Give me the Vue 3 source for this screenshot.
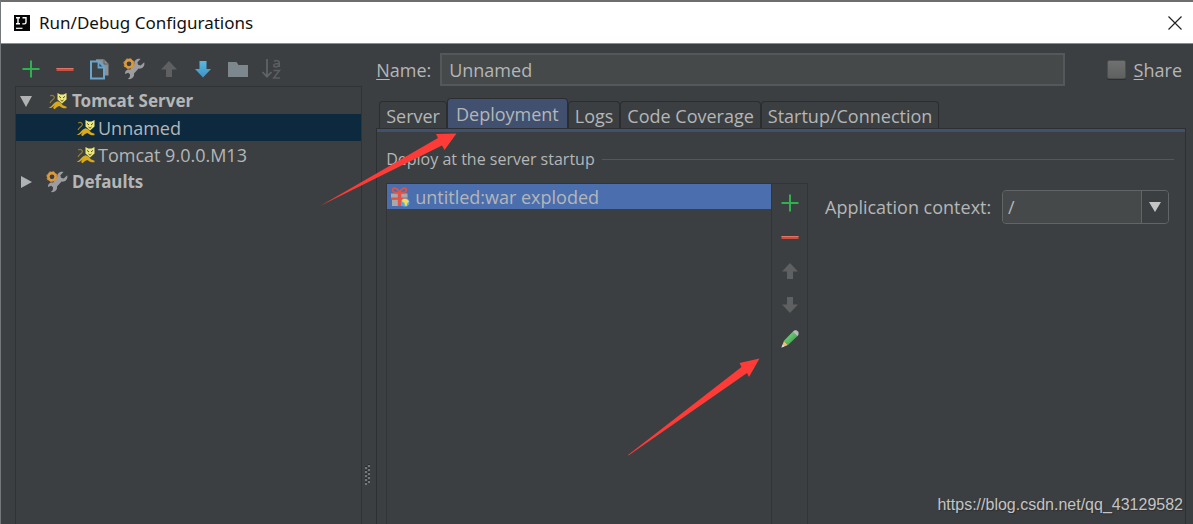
<script setup>
import { ref } from 'vue'

const name = ref('Unnamed')
const shared = ref(false)
const context = ref('/')
const activeTab = ref('Deployment')
const tabs = ['Server', 'Deployment', 'Logs', 'Code Coverage', 'Startup/Connection']
const selected = ref('Unnamed')

const tools = [
  { id: 'add', label: 'Add' },
  { id: 'remove', label: 'Remove' },
  { id: 'copy', label: 'Copy' },
  { id: 'wrench', label: 'Edit defaults' },
  { id: 'up', label: 'Move up', disabled: true },
  { id: 'downBlue', label: 'Move down' },
  { id: 'folder', label: 'Create folder' },
  { id: 'sort', label: 'Sort', disabled: true },
]
const sideTools = [
  { id: 'add', label: 'Add artifact' },
  { id: 'remove', label: 'Remove artifact' },
  { id: 'up', label: 'Move artifact up', disabled: true },
  { id: 'down', label: 'Move artifact down', disabled: true },
  { id: 'pencil', label: 'Edit artifact' },
]
const tree = [
  { label: 'Tomcat Server', icon: 'tomcat', group: true, open: true },
  { label: 'Unnamed', icon: 'tomcat' },
  { label: 'Tomcat 9.0.0.M13', icon: 'tomcat' },
  { label: 'Defaults', icon: 'wrench', group: true, open: false },
]
</script>

<template>
  <svg class="defs" width="0" height="0" aria-hidden="true">
    <defs>
      <linearGradient id="blueArrow" x1="0" y1="0" x2="0" y2="1">
        <stop offset="0" stop-color="#5cb8e0" /><stop offset="1" stop-color="#3d93c4" />
      </linearGradient>
      <linearGradient id="pencilBody" x1="0" y1="0" x2="1" y2="1">
        <stop offset="0" stop-color="#8ce08c" /><stop offset="1" stop-color="#2a9440" />
      </linearGradient>
      <symbol id="add" viewBox="0 0 22 22">
        <path d="M11 2.5v17M2.5 11h17" stroke="#2fb14f" stroke-width="2" fill="none" />
      </symbol>
      <symbol id="remove" viewBox="0 0 22 22">
        <path d="M2.5 10h17v3h-17z" fill="#c9503f" /><path d="M2.5 10h17v1h-17z" fill="#dd7668" />
      </symbol>
      <symbol id="copy" viewBox="0 0 22 22">
        <path d="M7 1.200h8l4.500 4.500V17.500h-4V9l-5-5H7z" fill="#8d8f91" />
        <path d="M15 1v5h4.500" fill="none" stroke="#5d6163" stroke-width="1" />
        <path d="M2 3.500h8l5 5.500V20.500H2z" fill="#3c4347" stroke="#69a5cd" stroke-width="2" />
        <path d="M9.500 4v5.500h5" fill="none" stroke="#69a5cd" stroke-width="1.800" />
      </symbol>
      <symbol id="wrench" viewBox="0 0 22 22">
        <path d="M21.200 4.200L17.700 7.500l-2.700-.7-.6-2.600L17.500 1c-3.700-.8-6.700 1.800-6.200 5.400L7.300 11.500c-3-.6-5.700 1.400-5.300 4.500l3.200-1.200 1.900 1.700-.4 2.700-1.900 1.800c3.800.8 6.900-1.900 6.200-5.400l4.600-5c3.700.6 6.600-2.500 5.600-6.400z" fill="#9b9da0" />
        <circle cx="6" cy="5.800" r="3.700" fill="#3c3f41" stroke="#dc9a3c" stroke-width="2.600" />
        <circle cx="6" cy="5.800" r="5.200" fill="none" stroke="#dc9a3c" stroke-width="1" stroke-dasharray="2 2.080" />
      </symbol>
      <symbol id="up" viewBox="0 0 22 22">
        <path d="M11 3l8 8.500h-5V19H8v-7.500H3z" fill="#5e6061" />
      </symbol>
      <symbol id="down" viewBox="0 0 22 22">
        <path d="M11 19l8-8.500h-5V3H8v7.500H3z" fill="#5e6061" />
      </symbol>
      <symbol id="downBlue" viewBox="0 0 22 22">
        <path d="M11 19.500l8-8.500h-4.500V3h-7v8H3z" fill="url(#blueArrow)" />
      </symbol>
      <symbol id="folder" viewBox="0 0 22 22">
        <path d="M1 4h8.500l2 3H21v12H1z" fill="#7d878e" />
      </symbol>
      <symbol id="sort" viewBox="0 0 22 22">
        <path d="M6 1v17.500M1.500 14L6 18.700l4.500-4.700" fill="none" stroke="#626466" stroke-width="1.700" />
        <path d="M13 3.400c1.500-1.200 5.300-1.200 5.300 1.200V9M18.300 5.500c-3 0-5.600.2-5.600 2s3.600 2 5.600-.2M12.500 12.500h6L12.700 20h6.300" fill="none" stroke="#5c5e60" stroke-width="1.500" />
      </symbol>
      <symbol id="pencil" viewBox="0 0 22 22">
        <path d="M2.500 19.500L5 12.800l4 4.200z" fill="#edc07a" />
        <path d="M2.500 19.500l1-2.900 1.900 1.800z" fill="#d9dcdd" />
        <path d="M5 12.800L13.500 4l4.800 4.300L9 17z" fill="url(#pencilBody)" />
        <path d="M13.500 4l2-1.800h2l2 1.800v2.800l-1.200 1.500z" fill="#b6bcbb" />
      </symbol>
      <symbol id="tomcat" viewBox="0 0 20 18">
        <path d="M.5 15.500c4-.3 4.200-5 9-6.300 2 .2 4 2 5.300 4.100l3.700 1.400v1.500c-3.500.2-5-.6-7-2.300-2 .5-3.800 2-4.700 3.300L5 16l1.800-2.700C5 15 3 16.800.5 15.500z" fill="#d9a91d" />
        <path d="M2.200 3.900c2.600-1.300 5.100.5 3.900 2.400S2.600 8.500 2.100 11.200" fill="none" stroke="#8d7d2c" stroke-width="1.200" />
        <path d="M9.500 1l2.800 1.500h3.400L18.500 1v6.500L14 11.500 9.500 7.500z" fill="#ece87e" />
        <path d="M11 4.300l2 1.700M17 4.300l-2 1.700M12.500 8l1.500 1.200L15.500 8" fill="none" stroke="#5c5520" stroke-width="1" />
      </symbol>
      <symbol id="gift" viewBox="0 0 20 20">
        <path d="M1 6.500h16.500v5H1zM2 12.500h15V19H2z" fill="#a8a8ab" />
        <path d="M7.800 6.500h3.500V19H7.800zM1 10.500h16.500v2H1z" fill="#df5349" />
        <path d="M9.500 5.500C7 0 2.500.5 2.500 3s4 3 7 2.500c3 .5 7 0 7-2.500s-4.500-3-7 2.500z" fill="none" stroke="#df5349" stroke-width="1.700" />
        <circle cx="15.200" cy="15.500" r="4.300" fill="#55a9dc" />
        <path d="M12 13c1.500-2.200 6-1.200 7 1.500l-1.500 1.500-1 3-1.700-.5-.3-2.700-2-.7z" fill="#f5dc58" />
      </symbol>
    </defs>
  </svg>

  <main class="dialog">
    <header class="titlebar">
      <svg class="logo" viewBox="0 0 16 16" aria-hidden="true">
        <rect width="16" height="16" fill="#050505" />
        <path d="M2 2.700h4M4 2.700v6M2 8.700h4M8.500 2.700H12v4.500q0 1.700-1.700 1.700H8.300" fill="none" stroke="#fff" stroke-width="1.400" />
        <path d="M2 13.300h6.500" stroke="#fff" stroke-width="1.200" />
      </svg>
      <h1>Run/Debug Configurations</h1>
      <button class="close" type="button" aria-label="Close">
        <svg viewBox="0 0 14 14"><path d="M.5.5l13 13M13.500.5l-13 13" stroke="#222" stroke-width="1.200" /></svg>
      </button>
    </header>

    <div class="body">
      <aside class="side">
        <div class="toolbar">
          <button v-for="t in tools" :key="t.id" type="button" :aria-label="t.label" :disabled="t.disabled">
            <svg><use :href="'#' + t.id" /></svg>
          </button>
        </div>
        <ul class="tree">
          <li v-for="n in tree" :key="n.label">
            <button
              type="button"
              :class="{ group: n.group, selected: selected === n.label }"
              @click="selected = n.label"
            >
              <svg v-if="n.group" class="twisty" viewBox="0 0 12 12" aria-hidden="true">
                <path :d="n.open ? 'M0 1h12L6 12z' : 'M1 0l11 6-11 6z'" fill="#b0b2b3" />
              </svg>
              <svg class="node" :class="n.icon" aria-hidden="true"><use :href="'#' + n.icon" /></svg>
              <span>{{ n.label }}</span>
            </button>
          </li>
        </ul>
      </aside>

      <div class="splitter">
        <svg viewBox="0 0 6 22" aria-hidden="true">
          <g v-for="i in 5" :key="i">
            <path :d="`M3 ${i * 4 - 3}h2v2h-2zM0 ${i * 4 - 1}h2v2h-2z`" fill="#75787a" />
            <path :d="`M3 ${i * 4 - 4}h2v1h-2zM0 ${i * 4 - 2}h2v1h-2z`" fill="#2a2c2d" />
          </g>
        </svg>
      </div>

      <section class="main">
        <div class="namerow">
          <label for="name"><u>N</u>ame:</label>
          <input id="name" v-model="name" type="text" />
          <label class="share"><input v-model="shared" type="checkbox" /><span><u>S</u>hare</span></label>
        </div>

        <div class="tabs" role="tablist">
          <button
            v-for="t in tabs"
            :key="t"
            type="button"
            role="tab"
            :aria-selected="activeTab === t"
            :class="{ active: activeTab === t }"
            @click="activeTab = t"
          >{{ t }}</button>
        </div>

        <div class="panel">
          <h2>Deploy at the server startup</h2>
          <div class="deploy">
            <ul class="artifacts">
              <li>
                <svg aria-hidden="true"><use href="#gift" /></svg>
                <span>untitled:war exploded</span>
              </li>
            </ul>
            <div class="sidetools">
              <button v-for="t in sideTools" :key="t.label" type="button" :aria-label="t.label" :disabled="t.disabled">
                <svg><use :href="'#' + t.id" /></svg>
              </button>
            </div>
            <div class="context">
              <label for="context">Application context:</label>
              <div class="combo">
                <select id="context" v-model="context"><option>/</option></select>
                <span class="arrow"><svg viewBox="0 0 12 10" aria-hidden="true"><path d="M0 0h12L6 10z" fill="#c4c6c6" /></svg></span>
              </div>
            </div>
          </div>
        </div>
      </section>
    </div>

    <svg class="mark first" viewBox="0 0 137 73" aria-hidden="true">
      <path d="M0 73L118 5l-2-4 20.500-.5L124.500 17l-2.500-4.500L0 73z" fill="#ff3b38" />
    </svg>
    <svg class="mark second" viewBox="0 0 132 98" aria-hidden="true">
      <path d="M0 97L113.500 9l-2-4L131.500.5 121 19l-2-4L.5 97.500z" fill="#ff3b38" />
    </svg>
    <p class="watermark">https://blog.csdn.net/qq_43129582</p>
  </main>
</template>

<style>
body { margin: 0; background: #3c3f41; overflow: hidden; }
</style>

<style scoped>
* { box-sizing: border-box; }
.defs { position: absolute; }
button { border: 0; padding: 0; background: none; color: inherit; font: inherit; }
svg { display: block; flex: none; }
ul { list-style: none; margin: 0; padding: 0; }
h1, h2, p { margin: 0; font-weight: 400; }
u { text-underline-offset: 2px; text-decoration-thickness: 1px; }
.dialog {
  position: relative;
  display: flex;
  flex-direction: column;
  height: 100vh;
  overflow: hidden;
  border-left: 1px solid #75787a;
  background: #3c3f41;
  color: #b4b6b7;
  font: 18px/24px "Open Sans", "Noto Sans", sans-serif;
}
.titlebar {
  flex: none;
  display: flex;
  align-items: center;
  height: 44px;
  padding: 0 11px 0 13px;
  border-top: 2px solid #6d6f6f;
  border-bottom: 1px solid #8b8e8f;
  background: #fff;
  color: #111;
}
.logo { width: 16px; height: 16px; margin-right: 9px; }
.titlebar h1 { flex: 1; font: 17px/24px "Noto Sans", sans-serif; }
.close svg { width: 14px; height: 14px; }
.body { flex: 1; display: flex; min-height: 0; }
.side { flex: none; width: 30.300%; display: flex; flex-direction: column; padding-left: 14px; }
.toolbar { display: flex; align-items: center; justify-content: space-between; height: 42px; padding: 7px 79px 0 5px; }
.toolbar svg { width: 22px; height: 22px; }
.tree { flex: 1; border: 1px solid #303233; border-bottom: 0; }
.tree button { display: flex; align-items: center; width: 100%; height: 27px; padding-left: 60px; text-align: left; }
.tree .group { padding-left: 4px; font: 700 17px/24px "Noto Sans", sans-serif; }
.tree .selected { background: #0d293e; }
.twisty { width: 12px; height: 12px; margin-right: 16px; }
.node { width: 20px; height: 18px; margin-right: 2px; }
.group .node { margin-right: 4px; }
.group .node.wrench { width: 22px; height: 22px; margin: 0 4px 0 -2px; }
.splitter { flex: none; display: flex; align-items: flex-end; width: 14px; padding: 0 0 38px 3px; }
.splitter svg { width: 6px; height: 22px; }
.main { flex: 1; display: flex; flex-direction: column; min-width: 0; padding-right: 7px; }
.namerow { display: flex; align-items: center; height: 33px; margin: 9px 4px 0 0; }
.namerow > label:first-child { width: 64px; }
.namerow input[type="text"] {
  flex: 1;
  min-width: 0;
  height: 33px;
  padding: 0 7px;
  border: 2px solid #55585a;
  background: #45494a;
  color: #b4b6b7;
  font: inherit;
}
.share { display: flex; align-items: center; gap: 8px; margin-left: 42px; }
.share input {
  appearance: none;
  width: 19px;
  height: 19px;
  margin: 0;
  border: 1px solid #4d4f50;
  border-radius: 2px;
  background: linear-gradient(#6f7171, #5f6161);
  box-shadow: 0 1px 0 #2c2e2f;
}
.tabs { display: flex; align-items: flex-end; height: 42px; padding-left: 3px; }
.tabs button {
  height: 27px;
  padding: 2px 6px 0;
  border: 1px solid #2b2d2e;
  border-bottom: 0;
  border-radius: 4px 4px 0 0;
}
.tabs .active { height: 30px; padding: 0 8px; background: #425070; }
.panel {
  flex: 1;
  display: flex;
  flex-direction: column;
  min-height: 0;
  padding: 16px 0 0 9px;
  border: solid #2d2f30;
  border-width: 1px 1px 0;
  box-shadow: inset 0 3px 0 #425070;
}
.panel h2 { display: flex; align-items: center; gap: 7px; margin-right: 11px; font-size: 16px; line-height: 28px; }
.panel h2::after { content: ""; flex: 1; height: 1px; background: #54575a; }
.deploy { flex: 1; display: flex; align-items: flex-start; margin-top: 10px; }
.artifacts { flex: 1; align-self: stretch; border: 1px solid #323435; border-bottom: 0; }
.artifacts li { display: flex; align-items: center; gap: 5px; height: 25px; padding-left: 3px; background: #4b6eaf; }
.artifacts svg { width: 20px; height: 20px; }
.sidetools {
  align-self: stretch;
  display: flex;
  flex-direction: column;
  align-items: center;
  gap: 12px;
  width: 36px;
  padding-top: 8px;
  border: 1px solid #323435;
  border-width: 1px 1px 0 0;
}
.sidetools svg { width: 22px; height: 22px; }
.context { display: flex; align-items: center; margin: 7px 16px 0 17px; }
.context label { width: 177px; }
.combo { display: flex; width: 167px; height: 34px; border: 1px solid #626566; border-radius: 4px; background: #45494a; overflow: hidden; }
.combo select {
  appearance: none;
  flex: 1;
  min-width: 0;
  padding: 0 5px;
  border: 0;
  background: #45494a;
  color: #b4b6b7;
  font: inherit;
}
.arrow { display: flex; align-items: center; justify-content: center; width: 27px; border-left: 1px solid #626566; background: #3c3f41; pointer-events: none; }
.arrow svg { width: 12px; height: 10px; }
.mark { position: absolute; pointer-events: none; }
.first { left: 319px; top: 133px; width: 137px; height: 73px; }
.second { left: 627px; top: 358px; width: 132px; height: 98px; }
.watermark {
  position: absolute;
  right: 10px;
  bottom: 7px;
  color: #c3c4c5;
  font: 16px/24px "Liberation Sans", Arial, sans-serif;
  text-shadow: 1px 1px 1px #2c2e2f;
}
</style>
